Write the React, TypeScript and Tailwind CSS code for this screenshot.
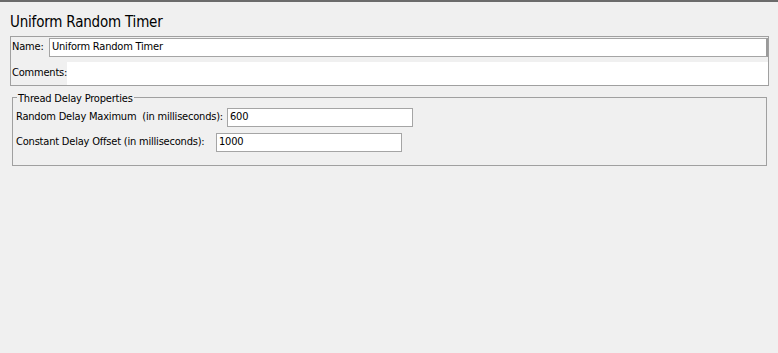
export default function App() {
  const font = { fontFamily: '"DejaVu Sans Condensed", "Liberation Sans", Arial, sans-serif' };
  return (
    <div
      style={font}
      className="h-[353px] w-[778px] overflow-hidden border-t-2 border-[#6b6b6b] bg-[#f0f0f0] text-[11px] tracking-[-0.2px] text-black"
    >
      <div className="h-[34px] whitespace-nowrap pl-[10px] pt-[11px] text-[15px] leading-[18px] tracking-[-0.2px]">
        Uniform Random Timer
      </div>

      <div className="ml-[10px] flex h-[50px] w-[759px] flex-col border border-[#a0a0a0]">
        <div className="flex h-[20px] items-end">
          <span className="flex h-[19px] w-[38px] shrink-0 items-center whitespace-nowrap pl-[1px]">Name:</span>
          <div className="flex h-[19px] flex-1 items-center whitespace-nowrap border border-r-2 border-[#a5a5a5] border-r-[#9a9a9a] bg-white pl-[2px]">
            Uniform Random Timer
          </div>
        </div>
        <div className="mt-[5px] flex h-[23px] items-center">
          <span className="w-[56px] shrink-0 whitespace-nowrap pl-[1px]">Comments:</span>
          <div className="h-full flex-1 bg-white" />
        </div>
      </div>

      <fieldset className="ml-[12px] mt-[3px] h-[77px] w-[755px] border border-[#a0a0a0] px-[3px] pb-0 pt-[2px]">
        <legend className="ml-[1px] h-[17px] whitespace-nowrap px-[1px] pt-[3px] leading-[14px]">Thread Delay Properties</legend>
        <div className="flex h-[19px] items-center">
          <span className="w-[211px] shrink-0 whitespace-nowrap">Random Delay Maximum&nbsp; (in milliseconds):</span>
          <div className="flex h-[19px] w-[186px] items-center border border-[#a5a5a5] bg-white pl-[2px]">600</div>
        </div>
        <div className="mt-[6px] flex h-[19px] items-center">
          <span className="w-[200px] shrink-0 whitespace-nowrap">Constant Delay Offset (in milliseconds):</span>
          <div className="flex h-[19px] w-[186px] items-center border border-[#a5a5a5] bg-white pl-[2px]">1000</div>
        </div>
      </fieldset>
    </div>
  );
}
